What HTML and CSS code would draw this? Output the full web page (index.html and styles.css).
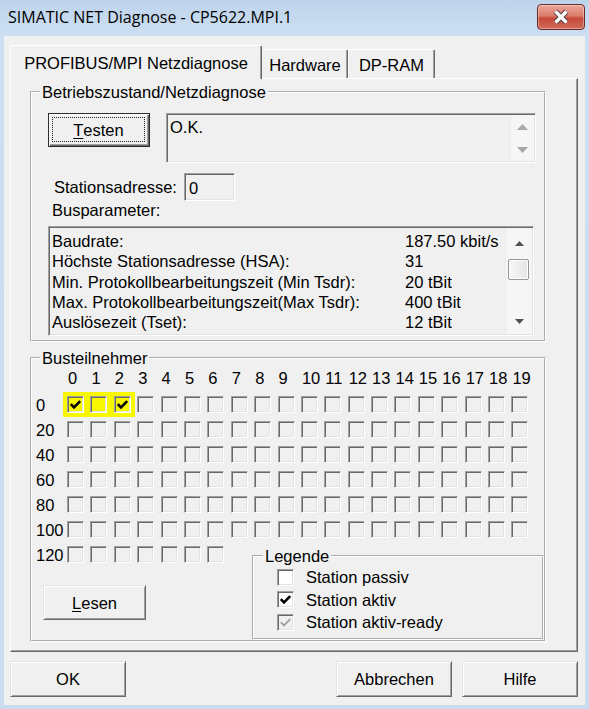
FILE: index.html
```html
<!DOCTYPE html>
<html lang="de">
<head>
<meta charset="utf-8">
<title>SIMATIC NET Diagnose</title>
<link rel="stylesheet" href="styles.css">
</head>
<body>
<div class="window">
  <header class="titlebar">
    <span class="title">SIMATIC NET Diagnose - CP5622.MPI.1</span>
    <button class="close" aria-label="Schließen">
      <svg width="20" height="16" viewBox="0 0 20 16">
        <path class="x-edge" d="M4.5 2.5 L15.5 13.5 M15.5 2.5 L4.5 13.5"/>
        <path class="x-face" d="M4.5 2.5 L15.5 13.5 M15.5 2.5 L4.5 13.5"/>
      </svg>
    </button>
  </header>

  <div class="client">
    <div class="tabs">
      <div class="tab active tab-net">PROFIBUS/MPI Netzdiagnose</div>
      <div class="tab tab-hw">Hardware</div>
      <div class="tab tab-dp">DP-RAM</div>
    </div>

    <div class="panel">
      <fieldset class="group group-state">
        <legend>Betriebszustand/Netzdiagnose</legend>
        <div class="state-body">
          <div class="test-row">
            <button class="btn btn-default btn-test"><span class="focus"><u>T</u>esten</span></button>
            <div class="sunken status-box">
              <div class="status-text">O.K.</div>
              <div class="vscroll vscroll-off">
                <span class="arrow"><svg width="11" height="6" viewBox="0 0 11 6"><path d="M0 6 L5.5 0 L11 6Z"/></svg></span>
                <span class="arrow"><svg width="11" height="6" viewBox="0 0 11 6"><path d="M0 0 L5.5 6 L11 0Z"/></svg></span>
              </div>
            </div>
          </div>

          <div class="addr-row">
            <span>Stationsadresse:</span>
            <div class="sunken addr-field">0</div>
          </div>
          <div class="bus-label">Busparameter:</div>

          <div class="sunken param-list">
            <div class="param-grid">
              <span>Baudrate:</span><span>187.50 kbit/s</span>
              <span>Höchste Stationsadresse (HSA):</span><span>31</span>
              <span>Min. Protokollbearbeitungszeit (Min Tsdr):</span><span>20 tBit</span>
              <span>Max. Protokollbearbeitungszeit(Max Tsdr):</span><span>400 tBit</span>
              <span>Auslösezeit (Tset):</span><span>12 tBit</span>
            </div>
            <div class="vscroll">
              <span class="arrow arrow-up"><svg width="11" height="6" viewBox="0 0 11 6"><path d="M1 6 L5.5 1 L10 6Z"/></svg></span>
              <span class="thumb"></span>
              <span class="arrow arrow-down"><svg width="11" height="6" viewBox="0 0 11 6"><path d="M1 0 L5.5 5 L10 0Z"/></svg></span>
            </div>
          </div>
        </div>
      </fieldset>

      <fieldset class="group group-bus">
        <legend>Busteilnehmer</legend>
        <div class="matrix">
          <span></span>
          <span class="hdr">0</span><span class="hdr">1</span><span class="hdr">2</span><span class="hdr">3</span><span class="hdr">4</span>
          <span class="hdr">5</span><span class="hdr">6</span><span class="hdr">7</span><span class="hdr">8</span><span class="hdr">9</span>
          <span class="hdr">10</span><span class="hdr">11</span><span class="hdr">12</span><span class="hdr">13</span><span class="hdr">14</span>
          <span class="hdr">15</span><span class="hdr">16</span><span class="hdr">17</span><span class="hdr">18</span><span class="hdr">19</span>

          <span class="rl">0</span>
          <i class="cb hl"><svg class="tick" viewBox="0 0 15 15"><polyline points="2.8,7.2 6,10.4 12.2,4.2"/></svg></i>
          <i class="cb hl"></i>
          <i class="cb hl"><svg class="tick" viewBox="0 0 15 15"><polyline points="2.8,7.2 6,10.4 12.2,4.2"/></svg></i>
          <i class="cb"></i><i class="cb"></i><i class="cb"></i><i class="cb"></i><i class="cb"></i><i class="cb"></i><i class="cb"></i>
          <i class="cb"></i><i class="cb"></i><i class="cb"></i><i class="cb"></i><i class="cb"></i><i class="cb"></i><i class="cb"></i><i class="cb"></i><i class="cb"></i><i class="cb"></i>

          <span class="rl">20</span>
          <i class="cb"></i><i class="cb"></i><i class="cb"></i><i class="cb"></i><i class="cb"></i><i class="cb"></i><i class="cb"></i><i class="cb"></i><i class="cb"></i><i class="cb"></i>
          <i class="cb"></i><i class="cb"></i><i class="cb"></i><i class="cb"></i><i class="cb"></i><i class="cb"></i><i class="cb"></i><i class="cb"></i><i class="cb"></i><i class="cb"></i>

          <span class="rl">40</span>
          <i class="cb"></i><i class="cb"></i><i class="cb"></i><i class="cb"></i><i class="cb"></i><i class="cb"></i><i class="cb"></i><i class="cb"></i><i class="cb"></i><i class="cb"></i>
          <i class="cb"></i><i class="cb"></i><i class="cb"></i><i class="cb"></i><i class="cb"></i><i class="cb"></i><i class="cb"></i><i class="cb"></i><i class="cb"></i><i class="cb"></i>

          <span class="rl">60</span>
          <i class="cb"></i><i class="cb"></i><i class="cb"></i><i class="cb"></i><i class="cb"></i><i class="cb"></i><i class="cb"></i><i class="cb"></i><i class="cb"></i><i class="cb"></i>
          <i class="cb"></i><i class="cb"></i><i class="cb"></i><i class="cb"></i><i class="cb"></i><i class="cb"></i><i class="cb"></i><i class="cb"></i><i class="cb"></i><i class="cb"></i>

          <span class="rl">80</span>
          <i class="cb"></i><i class="cb"></i><i class="cb"></i><i class="cb"></i><i class="cb"></i><i class="cb"></i><i class="cb"></i><i class="cb"></i><i class="cb"></i><i class="cb"></i>
          <i class="cb"></i><i class="cb"></i><i class="cb"></i><i class="cb"></i><i class="cb"></i><i class="cb"></i><i class="cb"></i><i class="cb"></i><i class="cb"></i><i class="cb"></i>

          <span class="rl">100</span>
          <i class="cb"></i><i class="cb"></i><i class="cb"></i><i class="cb"></i><i class="cb"></i><i class="cb"></i><i class="cb"></i><i class="cb"></i><i class="cb"></i><i class="cb"></i>
          <i class="cb"></i><i class="cb"></i><i class="cb"></i><i class="cb"></i><i class="cb"></i><i class="cb"></i><i class="cb"></i><i class="cb"></i><i class="cb"></i><i class="cb"></i>
        </div>

        <div class="bus-bottom">
          <div class="bus-left">
            <div class="matrix matrix-tail">
              <span class="rl">120</span>
              <i class="cb"></i><i class="cb"></i><i class="cb"></i><i class="cb"></i><i class="cb"></i><i class="cb"></i><i class="cb"></i>
            </div>
            <button class="btn btn-read"><u>L</u>esen</button>
          </div>

          <fieldset class="group group-legend">
            <legend>Legende</legend>
            <div class="legend-item">
              <i class="cb cb-white"></i><span>Station passiv</span>
            </div>
            <div class="legend-item">
              <i class="cb cb-white"><svg class="tick" viewBox="0 0 15 15"><polyline points="2.8,7.2 6,10.4 12.2,4.2"/></svg></i><span>Station aktiv</span>
            </div>
            <div class="legend-item">
              <i class="cb"><svg class="tick tick-grey" viewBox="0 0 15 15"><polyline points="2.8,7.2 6,10.4 12.2,4.2"/></svg></i><span>Station aktiv-ready</span>
            </div>
          </fieldset>
        </div>
      </fieldset>
    </div>

    <div class="dialog-buttons">
      <button class="btn btn-dlg btn-ok">OK</button>
      <button class="btn btn-dlg">Abbrechen</button>
      <button class="btn btn-dlg">Hilfe</button>
    </div>
  </div>
</div>
</body>
</html>
```

FILE: styles.css
```css
* {
  box-sizing: border-box;
}

html,
body {
  margin: 0;
}

body {
  width: 589px;
  height: 709px;
  overflow: hidden;
  font: 16.5px/18px "Liberation Sans", Arial, sans-serif;
  color: #000;
  background: #c8dbef;
}

/* ---- window frame ---- */
.window {
  width: 589px;
  height: 709px;
  display: flex;
  flex-direction: column;
  background: linear-gradient(#bed4eb, #cddff2 36px, #c9dcf0);
}

.titlebar {
  flex: none;
  height: 36px;
  display: flex;
  align-items: flex-start;
  padding: 0 4px 0 8px;
}

.title {
  font: 16px/35px "Open Sans", "Noto Sans", sans-serif;
  color: #000;
}

.close {
  margin: 4px 0 0 auto;
  width: 48px;
  height: 26px;
  padding: 0;
  border: 1px solid #6a2a27;
  border-radius: 4px;
  background: linear-gradient(#eba899, #dc7b6c 45%, #c64a3b 55%, #d26b59);
  box-shadow: inset 0 0 0 1px rgba(255, 255, 255, 0.35);
  display: flex;
  align-items: center;
  justify-content: center;
}

.close svg {
  display: block;
}

.x-edge {
  fill: none;
  stroke: #5b4646;
  stroke-width: 5.4;
}

.x-face {
  fill: none;
  stroke: #fff;
  stroke-width: 3.2;
}

.client {
  flex: 1;
  margin: 0 4px 4px;
  padding: 9px 7px 0 6px;
  background: #f0f0f0;
  display: flex;
  flex-direction: column;
}

/* ---- tab strip ---- */
.tabs {
  flex: none;
  height: 34px;
  margin-bottom: -1px;
  display: flex;
  align-items: flex-end;
  position: relative;
  z-index: 1;
}

.tab {
  height: 29px;
  margin-bottom: 1px;
  padding-top: 6px;
  text-align: center;
  white-space: nowrap;
  background: #f0f0f0;
  border: 1px solid #fff;
  border-bottom: 0;
  border-right-color: #696969;
  border-radius: 2px 2px 0 0;
  box-shadow: inset -1px 0 0 #a0a0a0;
}

.tab.active {
  height: 34px;
  margin-bottom: 0;
  padding-top: 8px;
}

.tab-net { width: 252px; }
.tab-hw { width: 86px; border-left-color: #f0f0f0; }
.tab-dp { width: 87px; }

.panel {
  flex: none;
  height: 574px;
  padding: 4px 0 0 19px;
  border: 1px solid;
  border-color: #fff #696969 #696969 #fff;
  box-shadow: inset -1px -1px 0 #a0a0a0;
}

/* ---- etched group frames ---- */
.group {
  margin: 0;
  padding: 0;
  min-width: 0;
  border: 2px groove #fff;
}

.group > legend {
  margin-left: 8px;
  padding: 0 2px;
  line-height: 18px;
}

.group-state,
.group-bus {
  width: 516px;
}

/* ---- 3D edges ---- */
.sunken {
  background: #f0f0f0;
  border: 1px solid;
  border-color: #a0a0a0 #fff #fff #a0a0a0;
  box-shadow: inset 1px 1px 0 #696969, inset -1px -1px 0 #e3e3e3;
}

.btn {
  font: inherit;
  color: #000;
  background: #f0f0f0;
  padding: 0;
  border: 1px solid;
  border-color: #e3e3e3 #696969 #696969 #e3e3e3;
  box-shadow: inset 1px 1px 0 #fff, inset -1px -1px 0 #a0a0a0;
}

.btn u {
  text-decoration-thickness: 1px;
  text-underline-offset: 2px;
}

.btn-default {
  border-color: #2c2c2c;
  box-shadow: inset 1px 1px 0 #fff, inset -1px -1px 0 #696969, inset -2px -2px 0 #a0a0a0;
}

/* ---- Betriebszustand ---- */
.state-body {
  padding: 12px 8px 4px 16px;
}

.test-row {
  display: flex;
  align-items: flex-start;
  gap: 16px;
}

.btn-test {
  flex: none;
  width: 102px;
  height: 34px;
  padding: 3px 4px 4px 3px;
  display: flex;
}

.focus {
  flex: 1;
  display: flex;
  align-items: center;
  justify-content: center;
  border: 1px dotted #222;
}

.status-box {
  flex: 1;
  height: 50px;
  display: flex;
}

.status-text {
  flex: 1;
  padding: 4px 0 0 3px;
}

.vscroll {
  flex: none;
  display: flex;
  flex-direction: column;
  margin: 1px 1px 1px 0;
  background: #f6f6f6;
  border-left: 1px solid #ececec;
}

.vscroll-off {
  width: 24px;
}

.vscroll-off .arrow {
  flex: 1;
}

.vscroll-off .arrow svg {
  fill: #a9a9a9;
}

.arrow {
  display: flex;
  align-items: center;
  justify-content: center;
}

.arrow svg {
  display: block;
  fill: #505050;
}

.addr-row {
  margin-top: 10px;
  padding-left: 6px;
  display: flex;
  align-items: center;
  gap: 7px;
}

.addr-field {
  width: 51px;
  height: 28px;
  padding: 3px 0 0 4px;
  line-height: 22px;
}

.bus-label {
  padding-left: 4px;
}

.param-list {
  margin-top: 7px;
  width: 486px;
  height: 110px;
  display: flex;
}

.param-grid {
  flex: 1;
  padding: 5px 0 0 3px;
  display: grid;
  grid-template-columns: 353px auto;
  grid-auto-rows: 20.25px;
  align-content: start;
  white-space: nowrap;
}

.param-list .vscroll {
  width: 27px;
}

.arrow-up {
  height: 29px;
}

.thumb {
  height: 21px;
  margin: 2px 3px 0 2px;
  border: 1px solid #979797;
  border-radius: 2px;
  background: linear-gradient(to right, #f7f7f7, #e4e4e4);
  box-shadow: inset 0 0 0 1px #fdfdfd;
}

.arrow-down {
  margin-top: auto;
  height: 24px;
}

/* ---- Busteilnehmer ---- */
.group-bus {
  margin-top: 7px;
}

.matrix {
  padding: 1px 0 0 4px;
  display: grid;
  grid-template-columns: 28px repeat(20, 23.4px);
  grid-template-rows: 24px;
  grid-auto-rows: 25px;
  align-items: center;
}

.hdr {
  align-self: start;
  padding-left: 4px;
  line-height: 20px;
}

.rl {
  white-space: nowrap;
}

.cb {
  display: block;
  width: 17px;
  height: 17px;
  margin-left: 3px;
  background: #f0f0f0;
  border: 1px solid;
  border-color: #a0a0a0 #fff #fff #a0a0a0;
  box-shadow: inset 1px 1px 0 #696969, inset -1px -1px 0 #e3e3e3;
}

.cb.hl {
  background: #f7f700;
  box-shadow: inset 1px 1px 0 #696969, inset -1px -1px 0 #e3e3e3, 0 0 0 4px #f7f700;
}

.cb-white {
  background: #fff;
}

.tick {
  display: block;
  width: 15px;
  height: 15px;
  fill: none;
  stroke: #000;
  stroke-width: 2.6;
}

.tick-grey {
  stroke: #a0a0a0;
  stroke-width: 1.8;
}

.bus-bottom {
  display: flex;
  align-items: flex-start;
}

.bus-left {
  flex: none;
  width: 220px;
}

.matrix-tail {
  padding-top: 0;
  grid-template-columns: 28px repeat(7, 23.4px);
  grid-template-rows: none;
}

.btn-read {
  display: block;
  width: 103px;
  height: 35px;
  margin: 18px 0 0 11px;
}

.group-legend {
  flex: 1;
  margin-top: 5px;
  padding: 1px 0 4px 23px;
}

.group-legend > legend {
  margin-left: -14px;
}

.legend-item {
  height: 22.5px;
  display: flex;
  align-items: center;
  gap: 12px;
}

.legend-item .cb {
  margin-left: 0;
}

/* ---- dialog buttons ---- */
.dialog-buttons {
  margin-top: 9px;
  display: flex;
  gap: 10px;
}

.btn-dlg {
  width: 116px;
  height: 36px;
}

.btn-ok {
  margin-right: auto;
}
```
